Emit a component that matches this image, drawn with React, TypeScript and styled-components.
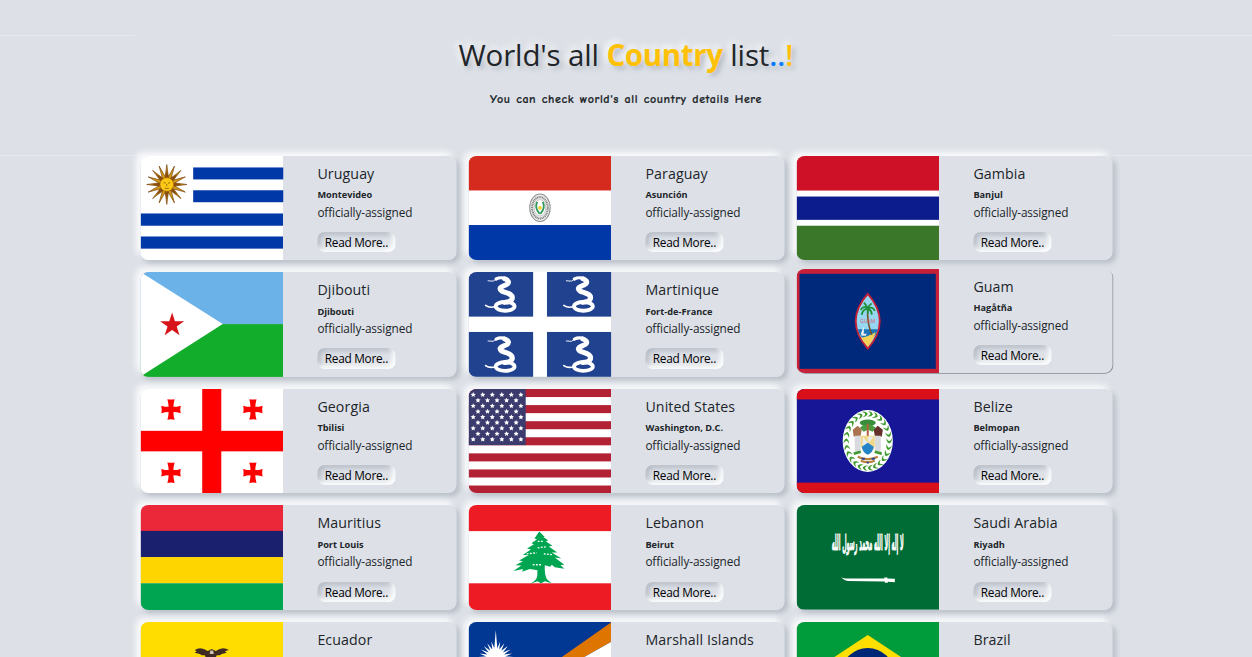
import React from "react";
import styled, { createGlobalStyle, css } from "styled-components";

const GlobalStyle = createGlobalStyle`
  *, *::before, *::after { box-sizing: border-box; }
  html, body { margin: 0; height: 100%; overflow: hidden; }
  body {
    background: #dde1e7;
    color: #212529;
    font-family: "Open Sans", "Noto Sans", sans-serif;
  }
`;

const raised = css`
  box-shadow: -4px -4px 6px rgba(255, 255, 255, 0.85), 3px 3px 5px rgba(94, 104, 121, 0.29);
`;

const Page = styled.main`
  height: 657px;
  overflow: hidden;
  padding-top: 35px;
`;

const Header = styled.header`
  height: 121px;
  border: solid transparent;
  border-width: 1px 0;
  border-image: linear-gradient(
      to right,
      #e7e9ee 0,
      #e7e9ee 130px,
      #dfe1e6 142px,
      #dfe1e6 1110px,
      #e7e9ee 1116px
    ) 1;
  text-align: center;
`;

const Heading = styled.h1`
  margin: 0;
  font-size: 29.5px;
  line-height: 38px;
  font-weight: 480;
  letter-spacing: -0.15px;
  text-shadow: -3px -3px 6px rgba(255, 255, 255, 0.9), 3px 3px 5px rgba(94, 104, 121, 0.35);
`;

const Accent = styled.span<{ $color: string; $bold?: boolean }>`
  color: ${(p) => p.$color};
  font-weight: ${(p) => (p.$bold ? 700 : 600)};
  letter-spacing: ${(p) => (p.$bold ? "-0.35px" : "0")};
`;

const Subtitle = styled.p`
  margin: 16px 0 0;
  font-family: "Comic Sans MS", "Comic Neue", Lato, sans-serif;
  font-size: 12px;
  line-height: 18px;
  font-weight: 700;
  letter-spacing: 0.58px;
  word-spacing: 0.8px;
  -webkit-text-stroke: 0.2px #212529;
`;

const Grid = styled.section`
  display: grid;
  grid-template-columns: repeat(3, 316px);
  grid-auto-rows: 104.6px;
  gap: 12px;
  width: 972px;
  margin: -0.4px auto 0;
  transform: translateX(0.5px);
`;

const Card = styled.article<{ $active?: boolean }>`
  display: flex;
  overflow: hidden;
  border-radius: 8px;
  background: #dde1e7;
  ${(p) =>
    p.$active
      ? css`
          margin: -3.6px 0 3.6px;
          box-shadow: 0.7px 0.7px 0.6px #85878c;
        `
      : raised}
`;

const FlagArt = styled.svg`
  display: block;
  flex: 0 0 142.5px;
  width: 142.5px;
  height: 100%;
`;

const Details = styled.div`
  padding: 7.9px 0 0 34.4px;
  white-space: nowrap;
`;

const Name = styled.h2`
  margin: 0;
  font-size: 14.2px;
  line-height: 19px;
  font-weight: 500;
  letter-spacing: 0.1px;
`;

const Capital = styled.h3`
  margin: 6.5px 0 0;
  font-size: 9.2px;
  line-height: 12px;
  font-weight: 700;
`;

const Status = styled.p`
  margin: 1.5px 0 0;
  font-size: 11.8px;
  line-height: 18px;
  font-weight: 400;
  letter-spacing: -0.12px;
`;

const ReadMore = styled.button`
  display: block;
  width: 78px;
  height: 20.5px;
  margin-top: 11.3px;
  padding: 0;
  border: 0;
  border-radius: 7px;
  background: #dde1e7;
  color: #000;
  font: 400 11.8px/21.5px "Open Sans", "Noto Sans", sans-serif;
  letter-spacing: -0.26px;
  box-shadow: inset -3px -3px 5px rgba(255, 255, 255, 0.95), inset 3px 3px 5px rgba(94, 104, 121, 0.3);
`;

const star = (cx: number, cy: number, outer: number, inner: number, n: number) =>
  Array.from({ length: n * 2 }, (_, i) => {
    const r = i % 2 ? inner : outer;
    const a = (Math.PI * i) / n - Math.PI / 2;
    return `${(cx + r * Math.cos(a)).toFixed(2)},${(cy + r * Math.sin(a)).toFixed(2)}`;
  }).join(" ");

const Uruguay = () => (
  <>
    <rect width="142" height="105" fill="#fff" />
    <g fill="#0038a8">
      <rect x="52.5" y="11.5" width="90" height="12" />
      <rect x="52.5" y="34.4" width="90" height="12" />
      <rect y="57.7" width="142" height="12.3" />
      <rect y="80.8" width="142" height="12.2" />
    </g>
    <polygon points={star(26.2, 28.6, 20, 8, 16)} fill="#d29b17" stroke="#7b4510" strokeWidth="0.7" />
    <polygon points={star(26.2, 28.6, 15, 6, 8)} fill="#8a4e0c" />
    <circle cx="26.2" cy="28.6" r="6.8" fill="#fcc916" stroke="#a9710f" strokeWidth="0.6" />
    <path d="M23 27h2.2M27.4 27h2.2M26.2 28v2.4M24 32.2q2.2 1.2 4.4 0" stroke="#8a5a0c" strokeWidth="0.8" fill="none" />
  </>
);

const Paraguay = () => (
  <>
    <rect width="142" height="105" fill="#fff" />
    <rect width="142" height="34.6" fill="#d52b1e" />
    <rect y="69.3" width="142" height="36" fill="#0038a8" />
    <ellipse cx="71.2" cy="52" rx="10.2" ry="13.8" fill="#ececec" stroke="#8a8d8a" />
    <ellipse cx="71.2" cy="52" rx="7.8" ry="10.8" fill="none" stroke="#7a7d7a" strokeWidth="2" strokeDasharray="1 .7" />
    <ellipse cx="71.2" cy="52" rx="5.8" ry="8.2" fill="#fff" stroke="#999" strokeWidth="0.5" />
    <path d="M68.5 46q-3 6 2.4 12M74 46q3 6-2.4 12" fill="none" stroke="#2f9a5c" strokeWidth="1.8" />
    <circle cx="71.2" cy="52" r="1.9" fill="#f3d12c" />
  </>
);

const Gambia = () => (
  <>
    <rect width="142" height="105" fill="#fff" />
    <rect width="142" height="34.7" fill="#ce1126" />
    <rect y="40.7" width="142" height="23.4" fill="#0c1c8c" />
    <rect y="70" width="142" height="35" fill="#3a7728" />
  </>
);

const Djibouti = () => (
  <>
    <rect width="142" height="52.3" fill="#6ab2e7" />
    <rect y="52.3" width="142" height="53" fill="#12ad2b" />
    <path d="M0 0L82 52.3L0 105z" fill="#fff" />
    <polygon points={star(31.5, 53.3, 12.6, 4.8, 5)} fill="#d7141a" />
  </>
);

const Snake = ({ x, y }: { x: number; y: number }) => (
  <g transform={`translate(${x} ${y})`} fill="none" stroke="#fff" strokeLinecap="round">
    <path d="M19.5 8.8l5 .4l3-2" strokeWidth="0.9" />
    <path d="M27.5 7Q32 4.6 37.5 6.8" strokeWidth="3.2" />
    <path d="M36 6.8Q42.5 9.5 38 12.5C34 14.5 29 15.5 33 19C37 21 45 21.5 43.5 27Q42 30 36 30.5" strokeWidth="5" />
    <ellipse cx="36.5" cy="34.5" rx="9.4" ry="4.4" strokeWidth="3.8" />
    <path d="M17 33.5q4 3 10 1.2" strokeWidth="1.6" />
  </g>
);

const Martinique = () => (
  <>
    <rect width="142" height="105" fill="#fff" />
    <g fill="#21428f">
      <rect width="64.4" height="44.8" />
      <rect x="78.2" width="64" height="44.8" />
      <rect y="60.2" width="64.4" height="45" />
      <rect x="78.2" y="60.2" width="64" height="45" />
    </g>
    <Snake x={0} y={0} />
    <Snake x={78} y={0} />
    <Snake x={0} y={60.4} />
    <Snake x={78} y={60.4} />
  </>
);

const Guam = () => (
  <>
    <rect width="142" height="105" fill="#c62139" />
    <rect x="3" y="4.8" width="135.8" height="95.4" fill="#00297b" />
    <path d="M71 25Q95 52.5 71 80Q47 52.5 71 25z" fill="#95d7f0" stroke="#c62139" strokeWidth="1.8" />
    <path d="M61 60.5h20.3q-1.8 6-5 9H66q-4-4-5-9z" fill="#1d74b8" />
    <path d="M64.5 69l6-1.5l8.5-4q-3 9-8 14.5q-4-4-6.5-9z" fill="#f4d257" />
    <path d="M71 40q-1 13 4 26" fill="none" stroke="#7b4a1d" strokeWidth="1.5" />
    <path d="M71 40q-4-4-7 1M71 40q-5 0-6 6M71 40q-2-5-4-6M71 40q2-5 4-5M71 40q5-3 7 2M71 40q4 1 4 6M71 40v5" stroke="#21913b" strokeWidth="1.8" fill="none" />
    <path d="M67 58v7h-3z" fill="#fff" />
    <path d="M64 65h6l-1 2h-4z" fill="#eee" />
    <text x="71" y="54.5" textAnchor="middle" fontSize="5" fontFamily="Open Sans, sans-serif" fill="#dc5868">GUAM</text>
  </>
);

const FlaredCross = ({ x, y }: { x: number; y: number }) => (
  <path
    transform={`translate(${x} ${y})`}
    d="M-3.6-10.3Q0-9.4 3.6-10.3Q2.4-6 2.4-2.6Q6-2.6 9.7-3.8Q8.8 0 9.7 3.8Q6 2.6 2.4 2.6Q2.4 6 3.6 10.3Q0 9.4-3.6 10.3Q-2.4 6-2.4 2.6Q-6 2.6-9.7 3.8Q-8.8 0-9.7-3.8Q-6-2.6-2.4-2.6Q-2.4-6-3.6-10.3z"
  />
);

const Georgia = () => (
  <>
    <rect width="142" height="105" fill="#fff" />
    <g fill="#f00">
      <rect x="61.5" width="19" height="105" />
      <rect y="42" width="142" height="20.6" />
      <FlaredCross x={30.4} y={20.5} />
      <FlaredCross x={112} y={20.5} />
      <FlaredCross x={30.4} y={84} />
      <FlaredCross x={112} y={84} />
    </g>
  </>
);

const UnitedStates = () => (
  <>
    <rect width="142" height="105" fill="#fff" />
    {Array.from({ length: 7 }, (_, i) => (
      <rect key={i} y={i * 16.15} width="142" height="8.08" fill="#b22234" />
    ))}
    <rect width="57" height="56.3" fill="#3c3b6e" />
    {Array.from({ length: 9 }, (_, r) =>
      Array.from({ length: r % 2 ? 5 : 6 }, (_, c) => (
        <polygon
          key={`${r}-${c}`}
          points={star(4.7 + (r % 2 ? 4.75 : 0) + c * 9.5, 5.8 + r * 5.6, 2.7, 1.3, 5)}
          fill="#fff"
        />
      ))
    )}
  </>
);

const Belize = () => (
  <>
    <rect width="142" height="105" fill="#171696" />
    <rect width="142" height="10.5" fill="#d90f19" />
    <rect y="94" width="142" height="11" fill="#d90f19" />
    <ellipse cx="71" cy="52.2" rx="25" ry="31" fill="#fff" />
    {Array.from({ length: 26 }, (_, i) => {
      const a = (i / 26) * 360;
      const t = (a * Math.PI) / 180;
      return (
        <path
          key={i}
          transform={`translate(${71 + 21.4 * Math.cos(t)} ${52.2 + 27.2 * Math.sin(t)}) rotate(${a + 90})`}
          d="M-2.8-2.8Q1.2-2.8 2.6 0Q1.2 2.8-2.8 2.8Q0 1.2 .2 0Q0-1.2-2.8-2.8z"
          fill="#3f9a2e"
        />
      );
    })}
    <ellipse cx="71" cy="34" rx="8" ry="3.4" fill="#388e3c" />
    <path d="M63 39q8-7 16 0l-3 4l-5-2l-4 2z" fill="#4a9c3f" />
    <path d="M71 35v14" stroke="#b0623c" strokeWidth="2" />
    <path d="M56 41l5-4l4 4l-1 6l-7 1z" fill="#a9744f" />
    <path d="M86 41l-5-4l-4 4l1 6l7 1z" fill="#63302a" />
    <path d="M58 47h6v17h-6zM78 47h6v17h-6z" fill="#d9dadd" />
    <path d="M64 47h14v10q-2 7-7 8q-5-1-7-8z" fill="#f0d88a" />
    <path d="M66 48l5 6l-5 5zM71 48h6l-5 6z" fill="#e7eef2" />
    <path d="M65 58l6-4l6 4q-1 6-6 8q-5-2-6-8z" fill="#2584c7" />
    <path d="M57 65l7-2M78 63l7 2" stroke="#3f9a2e" strokeWidth="2.4" />
    <path d="M61 68q10 5 20 0M64 72q7 3 14 0" fill="none" stroke="#b98340" strokeWidth="2.2" />
    <path d="M65 70h3M75 70h3M70 74h2" stroke="#29449b" strokeWidth="1.8" />
  </>
);

const Mauritius = () => (
  <>
    <rect width="142" height="26.3" fill="#ea2839" />
    <rect y="26" width="142" height="26.3" fill="#1a206d" />
    <rect y="52.3" width="142" height="26.3" fill="#ffd500" />
    <rect y="78.6" width="142" height="27" fill="#00a551" />
  </>
);

const Lebanon = () => (
  <>
    <rect width="142" height="105" fill="#fff" />
    <rect width="142" height="26.2" fill="#ed1c24" />
    <rect y="78.6" width="142" height="27" fill="#ed1c24" />
    <path
      fill="#00a551"
      d="M70.5 26.5l5.5 5.5-1.500 0 5 3.500-2.500 1 6.500 4.500-3.500.6 8.500 6-5.500 0 9.500 6.200-6.500-1 9.500 7.200-4 .2 4 3.800-9.500-1.500-3-2.400-1.500 2-5.500-1.600q-.4 10 2.200 14l4.500 4-6.500-2-4 2-3.500-2-7.500 2.500q7-3 7.300-8l.2-5.500-7.500-1.200-8 2.800 1.500-2.800-10 2 8-5.500-6-.2 7.500-4.200-3.800-.6 9.500-5.600-5.800 0 8-5.500-3.800-1 7-4.300-2.600-1 5.600-4-2.600-.8z"
    />
    <g stroke="#fff" strokeWidth="1.3" strokeDasharray="1.8 1.4">
      <path d="M69 36.5h6M69 43l8-1M58 49l10-1M75 49l9 1M64 60h9" />
    </g>
  </>
);

const SaudiArabia = () => (
  <>
    <rect width="142" height="105" fill="#006c35" />
    <text
      transform="translate(71 44.8) scale(1 4.2)"
      textAnchor="middle"
      direction="rtl"
      fontFamily="DejaVu Sans, sans-serif"
      fontSize="5"
      fontWeight="700"
      fill="#fff"
      stroke="#fff"
      strokeWidth="0.2"
    >
      لا إله إلا الله محمد رسول الله
    </text>
    <path d="M44.5 72.8l4 .9h39v-1h3v1l7.5.3v3.6l-7-.5v1h-3v-1.4l-37-.5q-4-.8-6.5-3.4z" fill="#fff" />
  </>
);

const Ecuador = () => (
  <>
    <rect width="142" height="53" fill="#ffdd00" />
    <rect y="52" width="142" height="27" fill="#034ea2" />
    <rect y="78" width="142" height="27" fill="#ed1c24" />
    <path d="M54 28q6-3.600 13 1l4-2 4 2q7-4.600 13-1l-4 1.400 2 1.500-5 1.200-2 1.300h-3l-2 4h-8l-2-4h-3l-2-1.300-5-1.200 2-1.500z" fill="#3f2b22" />
    <path d="M69.5 28.700h3l.5 3.500h-4z" fill="#c9c3b4" />
  </>
);

const MarshallIslands = () => (
  <>
    <rect width="142" height="105" fill="#003893" />
    <path d="M142 .5L0 101L142 20z" fill="#dd7500" />
    <path d="M142 20L0 101v4L142 42z" fill="#fff" />
    <polygon points={star(27.2, 36, 17, 9, 24)} fill="#fff" />
    <polygon points={star(27.2, 36, 28, 3, 4)} fill="#fff" />
  </>
);

const Brazil = () => (
  <>
    <rect width="142" height="105" fill="#009b3a" />
    <path d="M71 13L130 52.3L71 92L12 52.3z" fill="#fedf00" />
    <circle cx="71" cy="52.3" r="26.3" fill="#002776" />
  </>
);

type Country = { name: string; capital: string; Flag: React.FC; active?: boolean };

const countries: Country[] = [
  { name: "Uruguay", capital: "Montevideo", Flag: Uruguay },
  { name: "Paraguay", capital: "Asunción", Flag: Paraguay },
  { name: "Gambia", capital: "Banjul", Flag: Gambia },
  { name: "Djibouti", capital: "Djibouti", Flag: Djibouti },
  { name: "Martinique", capital: "Fort-de-France", Flag: Martinique },
  { name: "Guam", capital: "Hagåtña", Flag: Guam, active: true },
  { name: "Georgia", capital: "Tbilisi", Flag: Georgia },
  { name: "United States", capital: "Washington, D.C.", Flag: UnitedStates },
  { name: "Belize", capital: "Belmopan", Flag: Belize },
  { name: "Mauritius", capital: "Port Louis", Flag: Mauritius },
  { name: "Lebanon", capital: "Beirut", Flag: Lebanon },
  { name: "Saudi Arabia", capital: "Riyadh", Flag: SaudiArabia },
  { name: "Ecuador", capital: "Quito", Flag: Ecuador },
  { name: "Marshall Islands", capital: "Majuro", Flag: MarshallIslands },
  { name: "Brazil", capital: "Brasília", Flag: Brazil },
];

export default function App() {
  return (
    <Page>
      <GlobalStyle />
      <Header>
        <Heading>
          World's all <Accent $color="#ffc107" $bold>Country</Accent> list
          <Accent $color="#007bff">..</Accent>
          <Accent $color="#ffc107">!</Accent>
        </Heading>
        <Subtitle>You can check world's all country details Here</Subtitle>
      </Header>
      <Grid>
        {countries.map(({ name, capital, Flag, active }) => (
          <Card key={name} $active={active}>
            <FlagArt viewBox="0 0 142 105" preserveAspectRatio="none">
              <Flag />
            </FlagArt>
            <Details>
              <Name>{name}</Name>
              <Capital>{capital}</Capital>
              <Status>officially-assigned</Status>
              <ReadMore>Read More..</ReadMore>
            </Details>
          </Card>
        ))}
      </Grid>
    </Page>
  );
}
